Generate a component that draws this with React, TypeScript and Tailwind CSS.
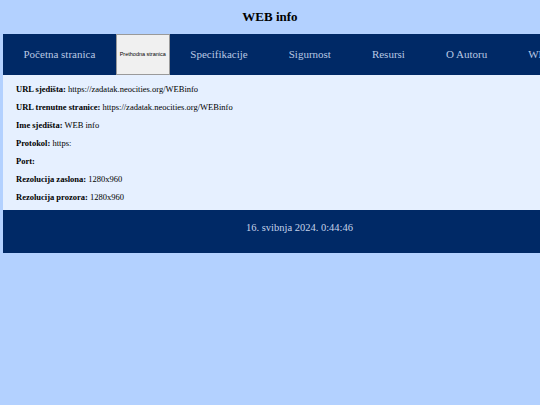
const navItems = ["Specifikacije", "Sigurnost", "Resursi", "O Autoru", "WEB standardi"];

const info: [string, string][] = [
  ["URL sjedišta:", "https://zadatak.neocities.org/WEBinfo"],
  ["URL trenutne stranice:", "https://zadatak.neocities.org/WEBinfo"],
  ["Ime sjedišta:", "WEB info"],
  ["Protokol:", "https:"],
  ["Port:", ""],
  ["Rezolucija zaslona:", "1280x960"],
  ["Rezolucija prozora:", "1280x960"],
];

export default function App() {
  return (
    <div className="h-[405px] w-[540px] overflow-hidden bg-[#b3d1ff] font-['Liberation_Serif',serif] text-black">
      <h1 className="pt-[9px] text-center text-[13px] font-bold leading-[16px]">WEB info</h1>

      <div className="ml-[3px] mt-[9px] w-[593px]">
        {/* Navigation */}
        <nav className="flex h-[41px] items-stretch whitespace-nowrap bg-[#002966] text-[11px] text-[#b9c8e4]">
          <a className="flex items-center px-[20.5px]">Početna stranica</a>
          <button className="flex w-[54px] shrink-0 items-center justify-center border border-[#9a9a9a] bg-[#f0f0f0] font-['Liberation_Sans',sans-serif] text-[5.5px] text-black">
            Prethodna stranica
          </button>
          {navItems.map((item) => (
            <a key={item} className="flex shrink-0 items-center px-[20.5px]">
              {item}
            </a>
          ))}
        </nav>

        {/* Info */}
        <section className="flex flex-col gap-[9px] bg-[#e6f0ff] px-[13px] pb-[8px] pt-[10px] text-[8.5px] leading-[9px]">
          {info.map(([label, value]) => (
            <p key={label}>
              <b>{label}</b> {value}
            </p>
          ))}
        </section>

        {/* Footer */}
        <footer className="flex h-[43px] items-center justify-center bg-[#002966] pb-[7px] text-[10.5px] text-[#c6d3ea]">
          16. svibnja 2024. 0:44:46
        </footer>
      </div>
    </div>
  );
}
